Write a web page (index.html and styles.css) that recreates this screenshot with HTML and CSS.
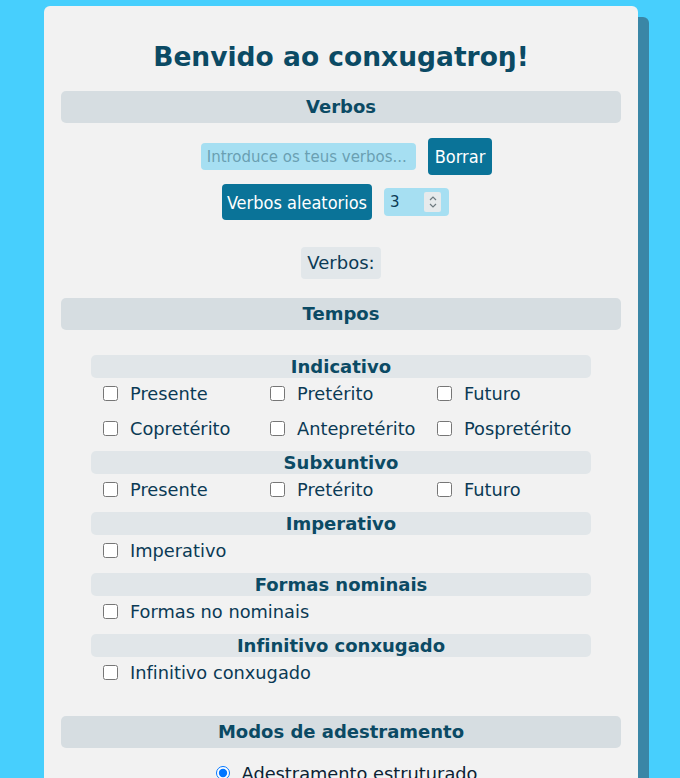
FILE: index.html
```html
<!DOCTYPE html>
<html lang="gl">
<head>
    <meta charset="UTF-8">
    <meta name="viewport" content="width=device-width, initial-scale=1.0">
    <title>Conxugatroŋ</title>
    <link rel="stylesheet" href="styles.css">
</head>
<body>
    <div class="container">
        <h1>Benvido ao conxugatroŋ!</h1>

        <div class="section-title">Verbos</div>
        <div class="row first-row">
            <input type="text" id="verbInput" class="verb-input" placeholder="Introduce os teus verbos...">
            <button id="clearButton">Borrar</button>
        </div>
        <div class="row random-row">
            <button id="randomButton">Verbos aleatorios</button>
            <div class="count-box">
                <input type="number" id="randomCount" class="count-input" value="3" min="1">
                <span class="spinner">
                    <svg width="10" height="14" viewBox="0 0 10 14" fill="none" stroke="#6d7a80" stroke-width="1.2">
                        <polyline points="2,5 5,2 8,5"/>
                        <polyline points="2,9 5,12 8,9"/>
                    </svg>
                </span>
            </div>
        </div>
        <div class="row verbs-row">
            <div class="verb-list">Verbos:</div>
        </div>

        <div class="section-title">Tempos</div>
        <div class="tenses">
            <div class="group-title">Indicativo</div>
            <div class="options">
                <label><input type="checkbox"> Presente</label>
                <label><input type="checkbox"> Pretérito</label>
                <label><input type="checkbox"> Futuro</label>
                <label><input type="checkbox"> Copretérito</label>
                <label><input type="checkbox"> Antepretérito</label>
                <label><input type="checkbox"> Pospretérito</label>
            </div>

            <div class="group-title">Subxuntivo</div>
            <div class="options">
                <label><input type="checkbox"> Presente</label>
                <label><input type="checkbox"> Pretérito</label>
                <label><input type="checkbox"> Futuro</label>
            </div>

            <div class="group-title">Imperativo</div>
            <div class="options">
                <label><input type="checkbox"> Imperativo</label>
            </div>

            <div class="group-title">Formas nominais</div>
            <div class="options">
                <label class="wide"><input type="checkbox"> Formas no nominais</label>
            </div>

            <div class="group-title">Infinitivo conxugado</div>
            <div class="options">
                <label class="wide"><input type="checkbox"> Infinitivo conxugado</label>
            </div>
        </div>

        <div class="section-title">Modos de adestramento</div>
        <div class="modes">
            <label><input type="radio" name="mode" checked> Adestramento estruturado</label>
        </div>
    </div>
</body>
</html>
```

FILE: styles.css
```css
body {
    background-color: #47cffd;
    color: #0b3a55;
    font-family: "DejaVu Sans", Verdana, sans-serif;
    margin: 0;
}

.container {
    box-sizing: border-box;
    width: 594px;
    margin: 6px 0 0 44px;
    padding: 17px 17px 40px;
    background-color: #f2f2f2;
    border-radius: 6px;
    box-shadow: 11px 11px 0 #3a86a6;
}

h1 {
    font-size: 26.5px;
    line-height: 30px;
    text-align: center;
    color: #0b4a64;
    margin: 19px 0 19px;
}

.section-title {
    background-color: #d6dde1;
    border-radius: 5px;
    height: 32px;
    line-height: 32px;
    text-align: center;
    font-size: 18px;
    font-weight: bold;
    color: #0b4a64;
}

.row {
    display: flex;
    justify-content: center;
    align-items: center;
    gap: 12px;
    margin-top: 9px;
}

.first-row {
    margin-top: 15px;
    padding-left: 11px;
}

.random-row {
    padding-right: 11px;
}

.verbs-row {
    margin-top: 27px;
    margin-bottom: 19px;
}

.verb-input {
    box-sizing: border-box;
    width: 215px;
    height: 27px;
    padding: 0 4px 0 6px;
    border: none;
    border-radius: 4px;
    background-color: #a6dff2;
    font-family: "DejaVu Sans", Verdana, sans-serif;
    font-size: 15px;
    color: #0b3a55;
}

.verb-input::placeholder {
    color: #6a9fb2;
}

button {
    box-sizing: border-box;
    height: 37px;
    padding: 0 6px;
    border: none;
    border-radius: 4px;
    background-color: #0a7398;
    color: #ffffff;
    font-family: "DejaVu Sans Condensed", "DejaVu Sans", sans-serif;
    font-size: 18px;
    cursor: pointer;
}

#clearButton {
    padding: 0 7px;
}

#randomButton {
    height: 36px;
    padding: 0 5px;
}

.count-box {
    box-sizing: border-box;
    display: flex;
    align-items: center;
    width: 65px;
    height: 28px;
    padding: 0 8px 0 6px;
    border-radius: 4px;
    background-color: #a6dff2;
}

.count-input {
    flex: 1;
    min-width: 0;
    padding: 0;
    border: none;
    background: transparent;
    font-family: "DejaVu Sans", Verdana, sans-serif;
    font-size: 15px;
    color: #0b3a55;
    -moz-appearance: textfield;
}

.count-input::-webkit-inner-spin-button,
.count-input::-webkit-outer-spin-button {
    -webkit-appearance: none;
    margin: 0;
}

.spinner {
    display: flex;
    align-items: center;
    justify-content: center;
    width: 17px;
    height: 20px;
    background-color: #e6eaec;
    border-radius: 2px;
}

.verb-list {
    background-color: #e2e7ea;
    border-radius: 4px;
    padding: 0 6px;
    height: 32px;
    line-height: 32px;
    font-size: 18px;
}

.tenses {
    margin: 25px 30px 29px;
}

.group-title {
    background-color: #e1e6e9;
    border-radius: 5px;
    height: 23px;
    line-height: 23px;
    text-align: center;
    font-size: 18px;
    font-weight: bold;
    color: #0b4a64;
}

.options {
    display: grid;
    grid-template-columns: repeat(3, 167px);
    row-gap: 5px;
    padding-left: 12px;
    margin-bottom: 8px;
}

.options label {
    display: flex;
    align-items: center;
    height: 30px;
    font-size: 17.8px;
    white-space: nowrap;
}

.options label.wide {
    grid-column: span 2;
}

.options input[type="checkbox"] {
    width: 15px;
    height: 15px;
    margin: 0 12px 0 0;
}

.modes {
    display: flex;
    justify-content: center;
    margin-top: 13px;
    padding-left: 11px;
}

.modes label {
    display: flex;
    align-items: center;
    height: 24px;
    font-size: 17.8px;
    color: #0b2233;
}

.modes input[type="radio"] {
    width: 14px;
    height: 14px;
    margin: 0 12px 0 0;
}
```
